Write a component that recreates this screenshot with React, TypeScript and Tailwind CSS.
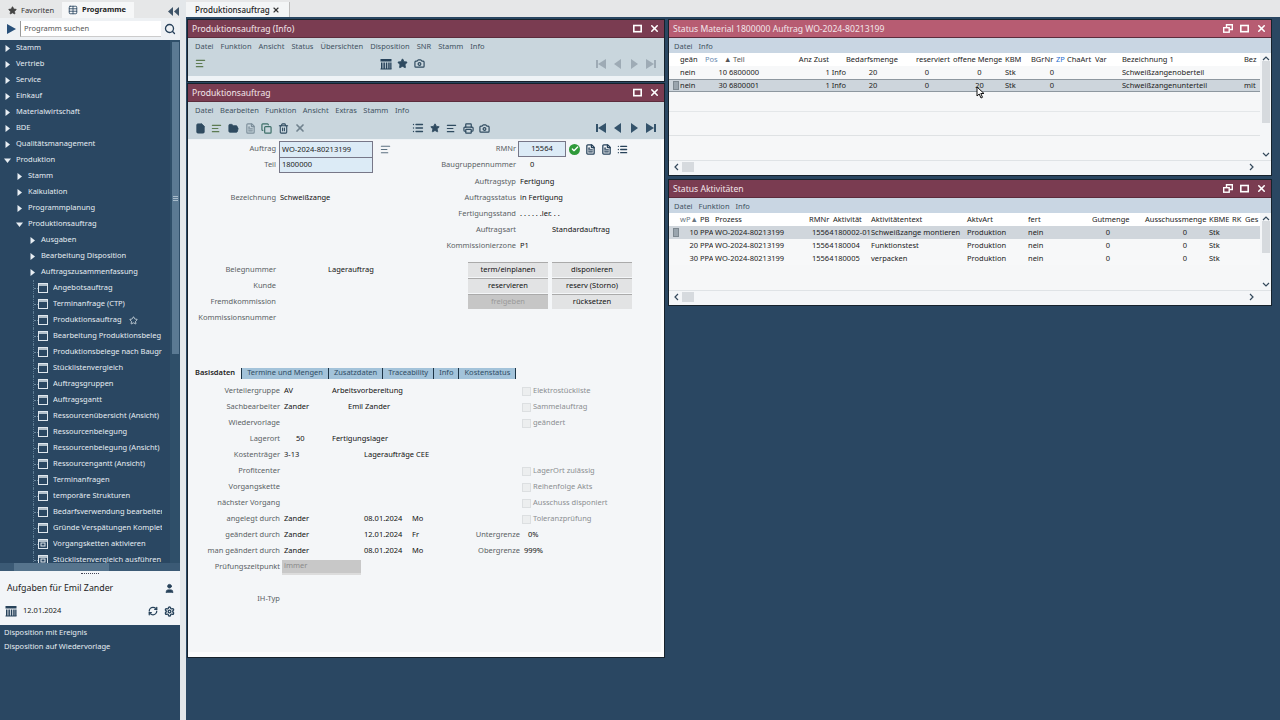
import React from "react";
import { AlignLeft, Camera, Copy, File, FolderOpen, Printer, RefreshCw, Search, Settings, Star, Table, Trash2, User, X, Check, List, FileText } from "lucide-react";

const font = "font-['Noto_Sans','Open_Sans',sans-serif]";
const tree: [number, string, string?][] = [
  [0, "Stamm"], [0, "Vertrieb"], [0, "Service"], [0, "Einkauf"], [0, "Materialwirtschaft"], [0, "BDE"], [0, "Qualitätsmanagement"],
  [0, "Produktion", "o"], [1, "Stamm"], [1, "Kalkulation"], [1, "Programmplanung"], [1, "Produktionsauftrag", "o"],
  [2, "Ausgaben"], [2, "Bearbeitung Disposition"], [2, "Auftragszusammenfassung"],
  [3, "Angebotsauftrag"], [3, "Terminanfrage (CTP)"], [3, "Produktionsauftrag", "s"], [3, "Bearbeitung Produktionsbeleg"],
  [3, "Produktionsbelege nach Baugr"], [3, "Stücklistenvergleich"], [3, "Auftragsgruppen"], [3, "Auftragsgantt"],
  [3, "Ressourcenübersicht (Ansicht)"], [3, "Ressourcenbelegung"], [3, "Ressourcenbelegung (Ansicht)"], [3, "Ressourcengantt (Ansicht)"],
  [3, "Terminanfragen"], [3, "temporäre Strukturen"], [3, "Bedarfsverwendung bearbeiten"], [3, "Gründe Verspätungen Komplet"],
  [4, "Vorgangsketten aktivieren"], [4, "Stücklistenvergleich ausführen"],
];

function Tri({ open }: { open?: boolean }) {
  return (
    <svg width="7" height="7" viewBox="0 0 7 7" className="shrink-0">
      <polygon points={open ? "0,1.5 7,1.5 3.5,6" : "1.5,0 6,3.5 1.5,7"} fill="#e8eef3" />
    </svg>
  );
}

function WinIcon({ gear }: { gear?: boolean }) {
  return (
    <svg width="10" height="10" viewBox="0 0 10 10" className="shrink-0" fill="none" stroke="#dfe7ee" strokeWidth="1">
      <rect x="0.5" y="0.5" width="9" height="9" />
      <line x1="0" y1="2" x2="10" y2="2" strokeWidth="1.5" />
      {gear && <rect x="3" y="4" width="4" height="3" />}
    </svg>
  );
}

function TreeRow({ lvl, text, flag }: { lvl: number; text: string; flag?: string }) {
  if (lvl >= 3) {
    return (
      <div className="flex h-4 items-center pl-[33px] overflow-hidden">
        <span className="w-[5px] h-full shrink-0 flex items-center border-l border-dotted border-[#5f7d94]">
          <span className="w-full border-t border-dotted border-[#6d8aa0]" />
        </span>
        <WinIcon gear={lvl === 4} />
        <span className="ml-[5px] w-[109px] h-4 overflow-hidden whitespace-nowrap flex items-center">
          {text}
          {flag === "s" && <Star size={9} className="ml-[7px] shrink-0" strokeWidth={2} />}
        </span>
      </div>
    );
  }
  const pad = lvl === 0 ? "pl-[4px]" : lvl === 1 ? "pl-[16px]" : "pl-[29px]";
  return (
    <div className={`flex h-4 items-center ${pad}`}>
      <Tri open={flag === "o"} />
      <span className="ml-[5px] whitespace-nowrap">{text}</span>
    </div>
  );
}

function SolidCalendar() {
  return (
    <svg width="12" height="12" viewBox="0 0 12 12" fill="#27425a">
      <rect x="0.5" y="1" width="11" height="2.5" />
      <rect x="1" y="4.5" width="1.5" height="6.5" /><rect x="3.4" y="4.5" width="1.5" height="6.5" />
      <rect x="5.8" y="4.5" width="1.5" height="6.5" /><rect x="8.2" y="4.5" width="1.5" height="6.5" />
      <rect x="10.2" y="4.5" width="1.3" height="6.5" /><rect x="0.5" y="10.5" width="11" height="1" />
    </svg>
  );
}

function Sidebar() {
  return (
    <aside className="w-[180px] h-[720px] flex flex-col shrink-0 bg-[#2a4762] text-[7.5px] leading-none text-[#e6edf2]">
      <div className="h-[18px] bg-[#e6e7e8] flex items-end text-[#333] shrink-0">
        <div className="w-[62px] h-[15px] flex items-center pl-[8px] gap-[4px]">
          <Star size={9} fill="#444" stroke="#444" />
          <span>Favoriten</span>
        </div>
        <div className="w-[72px] h-[16px] bg-[#f6f7f8] flex items-center pl-[6px] gap-[4px] font-bold text-[#222]">
          <Table size={10} className="text-[#2a4762]" />
          <span>Programme</span>
        </div>
        <div className="flex-1 flex justify-end pr-[1px] pb-[2px]">
          <svg width="11" height="9" viewBox="0 0 11 9"><polygon points="5,0 0,4.5 5,9" fill="#3f5468" /><polygon points="11,0 6,4.5 11,9" fill="#3f5468" /></svg>
        </div>
      </div>
      <div className="h-[22px] bg-[#eef1f4] flex items-center shrink-0 pl-[7px]">
        <svg width="9" height="10" viewBox="0 0 9 10"><polygon points="0,0 9,5 0,10" fill="#28507a" /></svg>
        <div className="ml-[4px] w-[141px] h-[16px] bg-white border-l border-[#999] border-b border-b-[#ccc] text-[#555] flex items-center pl-[3px]">Programm suchen</div>
        <Search size={12} strokeWidth={2.6} className="ml-[3px] text-[#26405a]" />
      </div>
      <div className="flex-1 flex min-h-0 relative">
        <div className="flex-1 min-w-0 overflow-hidden">
          {tree.map((t, i) => <TreeRow key={i} lvl={t[0]} text={t[1]} flag={t[2]} />)}
        </div>
        <div className="w-[10px] bg-[#2f4f69] flex flex-col items-center py-[2px]">
          <div className="w-[7px] h-[312px] bg-[#5b7a93] flex flex-col justify-center gap-[1px] items-center">
            <span className="w-[5px] h-px bg-[#a8bccb]" /><span className="w-[5px] h-px bg-[#a8bccb]" /><span className="w-[5px] h-px bg-[#a8bccb]" />
          </div>
        </div>
        <div className="absolute left-0 right-0 bottom-0 h-[8px] bg-[#3b5a75]">
          <div className="ml-[14px] w-[95px] h-[8px] bg-[#56748d]" />
        </div>
      </div>
      <div className="h-[54px] bg-[#f2f5f8] shrink-0 text-[#222] flex flex-col">
        <div className="h-[5px] flex justify-center items-center"><span className="w-[18px] border-t border-dotted border-[#445]" /></div>
        <div className="h-[23px] flex items-center justify-between pl-[7px] pr-[5px] pt-px text-[8.8px]">
          <span>Aufgaben für Emil Zander</span>
          <User size={11} fill="#27425a" stroke="#27425a" />
        </div>
        <div className="h-[24px] flex items-center pl-[5px] pr-[5px]">
          <SolidCalendar />
          <span className="ml-[6px] flex-1">12.01.2024</span>
          <RefreshCw size={10} strokeWidth={3} className="text-[#27425a]" />
          <Settings size={11} strokeWidth={3} className="ml-[6px] text-[#27425a]" />
        </div>
      </div>
      <div className="h-[95px] shrink-0 pl-[4px] pt-px">
        <div className="h-[14px] flex items-center">Disposition mit Ereignis</div>
        <div className="h-[14px] flex items-center">Disposition auf Wiedervorlage</div>
      </div>
    </aside>
  );
}

function Nav({ on }: { on?: boolean }) {
  const c = on ? "#34536b" : "#9eabb5";
  const items = [
    <g key="a"><rect x="0" y="1" width="2" height="8" fill={c} /><polygon points="10,0 2,5 10,10" fill={c} /></g>,
    <polygon key="b" points="8,0 1,5 8,10" fill={c} />,
    <polygon key="c" points="2,0 9,5 2,10" fill={c} />,
    <g key="d"><rect x="8" y="1" width="2" height="8" fill={c} /><polygon points="0,0 8,5 0,10" fill={c} /></g>,
  ];
  return (
    <div className="flex gap-[6.7px] pr-[8px]">
      {items.map((it, i) => <svg key={i} width="10" height="10" viewBox="0 0 10 10">{it}</svg>)}
    </div>
  );
}

function TitleBar({ title, active, restore }: { title: string; active?: boolean; restore?: boolean }) {
  return (
    <div className={`h-[18px] shrink-0 flex items-center pl-[4px] pr-[4px] text-[8.6px] leading-none text-[#f2e6ea] border-b border-[#5c2c3c] ${active ? "bg-[#b75c72]" : "bg-[#7a3c51]"}`}>
      <span className="flex-1 whitespace-nowrap pt-px">{title}</span>
      {restore && (
        <svg width="10" height="9" viewBox="0 0 10 9" className="mr-[7px]" fill="none" stroke="white" strokeWidth="1.4">
          <rect x="0.7" y="3.7" width="5.5" height="4.5" /><path d="M3.5 3V0.8H9.3V5.5H6.5" />
        </svg>
      )}
      <svg width="9" height="9" viewBox="0 0 9 9" className="mr-[7px]" fill="none" stroke="white" strokeWidth="1.6"><rect x="0.8" y="1.5" width="7.4" height="6.2" /></svg>
      <X size={11} strokeWidth={3.4} className="text-white" />
    </div>
  );
}

function Menu({ items, gap, pad }: { items: string[]; gap: string; pad: string }) {
  return (
    <div className={`h-[16px] shrink-0 flex items-center pt-px ${pad} ${gap} text-[7.5px] leading-none text-[#41525f]`}>
      {items.map((m) => <span key={m} className="whitespace-nowrap">{m}</span>)}
    </div>
  );
}

function Win({ cls, children }: { cls: string; children: React.ReactNode }) {
  return (
    <section className={`absolute flex flex-col overflow-hidden border border-[#16222c] bg-[#f4f6f8] ${cls}`}>
      {children}
    </section>
  );
}

const Lbl = ({ c, cls }: { c?: string; cls: string }) => <span className={`text-right whitespace-nowrap text-[#5a5f64] ${cls}`}>{c}</span>;
const Tbi = ({ children, cls }: { children: React.ReactNode; cls?: string }) => <span className={`w-[16.6px] flex justify-center shrink-0 ${cls ?? "text-[#2f4b60]"}`}>{children}</span>;

function Btn({ c, off }: { c: string; off?: boolean }) {
  return <div className={`w-[80px] h-[15px] flex items-center justify-center border-t border-[#aaa] ${off ? "bg-[#c6c6c6] text-[#9a9a9a]" : "bg-[#e2e3e4] text-[#111]"}`}>{c}</div>;
}

function TopRow({ l, children }: { l: string; children?: React.ReactNode }) {
  return <div className="h-4 flex items-center"><Lbl c={l} cls="w-[86px]" /><div className="ml-[4px] flex items-center">{children}</div></div>;
}

function BaseRow({ l, v1, v1c, v2, v2c, v3, v3l, chk, right }: { l?: string; v1?: string; v1c?: string; v2?: string; v2c?: string; v3?: string; v3l?: string; chk?: string; right?: string }) {
  return (
    <div className="h-4 grid grid-cols-[90px_52px_80px_108px_1fr] items-center whitespace-nowrap">
      <Lbl c={l} cls="" />
      <span className={`text-[#111] ${v1c ?? "pl-[4px]"}`}>{v1}</span>
      <span className={`text-[#111] ${v2c ?? ""}`}>{v2}</span>
      <div className="flex justify-between"><span className="text-[#111]">{v3}</span><Lbl c={v3l} cls="" /></div>
      {chk ? (
        <div className="flex items-center pl-[2px] text-[#8b8e91]">
          <span className="w-[9px] h-[9px] bg-[#eceeef] border border-[#dcdfe1] shrink-0" />
          <span className="ml-[2px]">{chk}</span>
        </div>
      ) : <span className={`text-[#111] ${right === "0%" ? "pl-[8px]" : "pl-[4px]"}`}>{right}</span>}
    </div>
  );
}

function InfoWin() {
  return (
    <Win cls="left-[1px] top-[2px] w-[478px] h-[63px]">
      <TitleBar title="Produktionsauftrag (Info)" />
      <div className="h-[38px] bg-[#c9d6dd] flex flex-col">
        <Menu pad="pl-[7px]" gap="gap-[7px]" items={["Datei", "Funktion", "Ansicht", "Status", "Übersichten", "Disposition", "SNR", "Stamm", "Info"]} />
        <div className="flex items-center pl-[4px] h-[19px]">
          <Tbi cls="text-[#5d7b52]"><AlignLeft size={11} strokeWidth={2.6} /></Tbi>
          <div className="w-[169px]" />
          <Tbi><SolidCalendar /></Tbi>
          <Tbi><Star size={11} fill="#2f4b60" /></Tbi>
          <Tbi><Camera size={11} strokeWidth={2.6} /></Tbi>
          <div className="flex-1" />
          <Nav />
        </div>
      </div>
      <div className="h-[5px] bg-[#eef3f6]" />
    </Win>
  );
}

function ProdWin() {
  return (
    <Win cls="left-[1px] top-[66px] w-[478px] h-[575px]">
      <TitleBar title="Produktionsauftrag" />
      <div className="h-[37px] shrink-0 bg-[#c9d6dd] flex flex-col">
        <Menu pad="pl-[7px]" gap="gap-[6.5px]" items={["Datei", "Bearbeiten", "Funktion", "Ansicht", "Extras", "Stamm", "Info"]} />
        <div className="flex items-center pl-[4px] h-[20px]">
          <Tbi><File size={11} fill="#2f4b60" /></Tbi>
          <Tbi cls="text-[#5d7b52]"><AlignLeft size={11} strokeWidth={2.6} /></Tbi>
          <Tbi><FolderOpen size={11} fill="#2f4b60" /></Tbi>
          <Tbi cls="text-[#7d8f9b]"><FileText size={11} strokeWidth={2.6} /></Tbi>
          <Tbi cls="text-[#3d6f68]"><Copy size={11} strokeWidth={2.6} /></Tbi>
          <Tbi><Trash2 size={11} strokeWidth={2.4} /></Tbi>
          <Tbi cls="text-[#71828e]"><X size={12} strokeWidth={3.4} /></Tbi>
          <div className="w-[102px]" />
          <Tbi><List size={12} strokeWidth={2.6} /></Tbi>
          <Tbi><Star size={10} fill="#2f4b60" /></Tbi>
          <Tbi><AlignLeft size={11} strokeWidth={2.6} /></Tbi>
          <Tbi><Printer size={11} strokeWidth={2.6} /></Tbi>
          <Tbi><Camera size={11} strokeWidth={2.6} /></Tbi>
          <div className="flex-1" />
          <Nav on />
        </div>
      </div>
      <div className="flex-1 min-h-0 flex flex-col text-[7.5px] leading-none pl-[2px] pt-px border-t border-[#eef3f6] border-r-[3px] border-r-[#fbfcfd] border-b-[5px] border-b-[#fbfcfd]">
        <div className="grid grid-cols-[240px_1fr] h-[114px] shrink-0">
          <div>
            <TopRow l="Auftrag"><span className="-ml-[1px] w-[94px] h-[16px] bg-[#dcebf6] border border-[#778] border-b-0 flex items-center pl-[2px] text-[#222]">WO-2024-80213199</span><AlignLeft size={11} strokeWidth={2.4} className="ml-[7px] text-[#5b7080]" /></TopRow>
            <TopRow l="Teil"><span className="-ml-[1px] w-[94px] h-[16px] bg-[#dcebf6] border border-[#778] flex items-center pl-[2px] text-[#222]">1800000</span></TopRow>
            <div className="h-[17px]" />
            <TopRow l="Bezeichnung"><span className="text-[#111]">Schweißzange</span></TopRow>
          </div>
          <div>
            <div className="h-4 flex items-center">
              <Lbl c="RMNr" cls="w-[86px]" />
              <span className="ml-[2px] w-[48px] h-[16px] bg-[#dcebf6] border border-[#778] flex items-center justify-center text-[#222]">15564</span>
              <span className="ml-[3px] w-[11px] h-[11px] rounded-full bg-[#2f9a3a] flex items-center justify-center"><Check size={8} strokeWidth={4} className="text-white" /></span>
              <FileText size={11} strokeWidth={2.8} className="ml-[5px] text-[#27425a]" />
              <FileText size={11} strokeWidth={2.8} className="ml-[5px] text-[#27425a]" />
              <List size={11} strokeWidth={2.8} className="ml-[5px] text-[#27425a]" />
            </div>
            <TopRow l="Baugruppennummer"><span className="pl-[10px] text-[#111]">0</span></TopRow>
            <div className="h-px" />
            <TopRow l="Auftragstyp"><span className="text-[#111]">Fertigung</span></TopRow>
            <TopRow l="Auftragsstatus"><span className="text-[#111]">in Fertigung</span></TopRow>
            <TopRow l="Fertigungsstand"><span className="text-[#111]">. . . . . .ler. . .</span></TopRow>
            <TopRow l="Auftragsart"><span className="pl-[32px] text-[#111]">Standardauftrag</span></TopRow>
            <TopRow l="Kommissionierzone"><span className="text-[#111]">P1</span></TopRow>
          </div>
        </div>
        <div className="mt-[7px] grid grid-cols-[278px_1fr] shrink-0 h-[64px]">
          <div>
            {["Belegnummer", "Kunde", "Fremdkommission", "Kommissionsnummer"].map((l, i) => (
              <div key={l} className="h-4 flex items-center"><Lbl c={l} cls="w-[86px]" />{i === 0 && <span className="ml-[52px] text-[#111]">Lagerauftrag</span>}</div>
            ))}
          </div>
          <div className="grid grid-cols-[84px_84px] auto-rows-[16px] content-start">
            <Btn c="term/einplanen" /><Btn c="disponieren" />
            <Btn c="reservieren" /><Btn c="reserv (Storno)" />
            <Btn c="freigeben" off /><Btn c="rücksetzen" />
          </div>
        </div>
        <div className="mt-[40px] flex items-center h-[14px] shrink-0 pl-[5px]">
          <span className="font-semibold text-[#222] pr-[6px]">Basisdaten</span>
          {["Termine und Mengen", "Zusatzdaten", "Traceability", "Info", "Kostenstatus"].map((t) => (
            <span key={t} className="h-[11px] flex items-center border-l border-[#1d3446] bg-[#a3c3da] px-[5px] text-[#2f4c63] whitespace-nowrap">{t}</span>
          ))}
          <span className="h-[11px] border-l border-[#1d3446]" />
        </div>
        <div className="mt-[3px] flex flex-col">
          <BaseRow l="Verteilergruppe" v1="AV" v2="Arbeitsvorbereitung" chk="Elektrostückliste" />
          <BaseRow l="Sachbearbeiter" v1="Zander" v2="Emil Zander" v2c="pl-[16px]" chk="Sammelauftrag" />
          <BaseRow l="Wiedervorlage" chk="geändert" />
          <BaseRow l="Lagerort" v1="50" v1c="pl-[16px]" v2="Fertigungslager" />
          <BaseRow l="Kostenträger" v1="3-13" v2="Lageraufträge CEE" v2c="pl-[32px]" />
          <BaseRow l="Profitcenter" chk="LagerOrt zulässig" />
          <BaseRow l="Vorgangskette" chk="Reihenfolge Akts" />
          <BaseRow l="nächster Vorgang" chk="Ausschuss disponiert" />
          <BaseRow l="angelegt durch" v1="Zander" v2="08.01.2024" v2c="pl-[32px]" v3="Mo" chk="Toleranzprüfung" />
          <BaseRow l="geändert durch" v1="Zander" v2="12.01.2024" v2c="pl-[32px]" v3="Fr" v3l="Untergrenze" right="0%" />
          <BaseRow l="man geändert durch" v1="Zander" v2="08.01.2024" v2c="pl-[32px]" v3="Mo" v3l="Obergrenze" right="999%" />
          <div className="h-4 flex items-center">
            <Lbl c="Prüfungszeitpunkt" cls="w-[90px]" />
            <span className="ml-[2px] w-[79px] h-[15px] bg-[#c8c8c8] border-b-2 border-[#dcdcdc] flex items-center pl-[2px] text-[#8a8a8a]">immer</span>
          </div>
          <div className="h-4" />
          <BaseRow l="IH-Typ" />
        </div>
      </div>
    </Win>
  );
}

const hM = "grid grid-cols-[25px_19px_9px_63px_50px_70px_37px_52px_26px_25px_11px_28px_27px_122px_16px]";
const bM = "grid grid-cols-[25px_22px_2px_80px_37px_54px_54px_51px_26px_23px_68px_122px_16px]";
const hA = "grid grid-cols-[20px_15px_94px_24px_38px_96px_61px_64px_53px_64px_23px_13px_15px]";
const bA = "grid grid-cols-[18px_17px_97px_19px_40px_96px_61px_52px_56px_73px_51px]";

function Scroll({ h }: { h: string }) {
  return (
    <div className="w-[11px] flex flex-col items-center shrink-0 bg-[#f4f6f8] text-[#34495c]">
      <svg width="8" height="6" viewBox="0 0 8 6" className="mt-[2px]" fill="none" stroke="currentColor" strokeWidth="1.2"><path d="M1 5L4 2L7 5" /></svg>
      <div className={`w-[8px] bg-[#d6dade] ${h}`} />
      <div className="flex-1" />
      <svg width="8" height="6" viewBox="0 0 8 6" className="mb-[2px]" fill="none" stroke="currentColor" strokeWidth="1.2"><path d="M1 1L4 4L7 1" /></svg>
    </div>
  );
}

function HBar() {
  return (
    <div className="h-[12px] shrink-0 flex items-center pl-[5px] pr-[17px] text-[#34495c] bg-[#f4f6f8] border-t border-[#dfe3e6]">
      <svg width="5" height="8" viewBox="0 0 5 8" fill="none" stroke="currentColor" strokeWidth="1.2"><path d="M4 1L1 4L4 7" /></svg>
      <span className="ml-[3px] w-[12px] h-[10px] bg-[#d6dade]" />
      <span className="flex-1" />
      <svg width="5" height="8" viewBox="0 0 5 8" fill="none" stroke="currentColor" strokeWidth="1.2"><path d="M1 1L4 4L1 7" /></svg>
    </div>
  );
}

const Marker = () => <span className="w-[6px] h-[9px] bg-[#9aa5ae] border border-[#7d8890] shrink-0" />;

function MatWin() {
  return (
    <Win cls="left-[482px] top-[2px] w-[604px] h-[157px]">
      <TitleBar title="Status Material 1800000 Auftrag WO-2024-80213199" active restore />
      <div className="h-[15px] shrink-0 bg-[#c9d6e3]"><Menu pad="pl-[5px]" gap="gap-[6px]" items={["Datei", "Info"]} /></div>
      <div className="flex-1 min-h-0 flex flex-col text-[7.5px] leading-none text-[#222] pb-[3px]">
        <div className="flex-1 min-h-0 flex">
          <div className="flex-1 min-w-0 flex flex-col bg-white">
            <div className="pl-[11px] pt-px h-[13px] shrink-0 flex items-center whitespace-nowrap">
              <div className={hM}>
                <span>geän</span><span className="text-[#6a8bb0]">Pos</span><span className="text-[#555]">▲</span><span className="text-[#555]">Teil</span><span className="text-right pr-[17px]">Anz Zust</span><span>Bedarfsmenge</span><span>reserviert</span><span>offene Menge</span><span>KBM</span><span>BGrNr</span><span className="text-[#2a6fd0]">ZP</span><span>ChaArt</span><span>Var</span><span>Bezeichnung 1</span><span className="overflow-hidden">Bez</span>
              </div>
            </div>
            <div className="pl-[11px] h-[13px] shrink-0 flex items-center whitespace-nowrap bg-[#f7f8f9]">
              <div className={bM}>
                <span>nein</span><span className="text-right">10</span><span /><span>6800000</span><span className="text-right">1 Info</span><span className="text-center">20</span><span className="text-center">0</span><span className="text-center">0</span><span>Stk</span><span className="text-right">0</span><span /><span>Schweißzangenoberteil</span><span />
              </div>
            </div>
            <div className="pl-[4px] h-[13px] shrink-0 flex items-center whitespace-nowrap bg-[#cdd5dc] border-y border-[#8e98a0]">
              <Marker />
              <div className={`${bM} ml-[1px]`}>
                <span>nein</span><span className="text-right">30</span><span /><span>6800001</span><span className="text-right">1 Info</span><span className="text-center">20</span><span className="text-center">0</span><span className="text-center">20</span><span>Stk</span><span className="text-right">0</span><span /><span>Schweißzangenunterteil</span><span>mit</span>
              </div>
            </div>
            <div className="flex-1 bg-[#f6f7f8] flex flex-col">
              <div className="h-[20px] border-b border-[#e4e7e9]" />
              <div className="h-[24px] border-b border-[#dfe2e4]" />
            </div>
          </div>
          <Scroll h="h-[62px]" />
        </div>
        <HBar />
      </div>
      <svg width="9" height="13" viewBox="0 0 9 13" className="absolute left-[307px] top-[66px]">
        <path d="M1 1V10L3.2 8L5 12L6.5 11.3L4.8 7.5H8Z" fill="white" stroke="#111" strokeWidth="1" />
      </svg>
    </Win>
  );
}

function AktRow({ cells, sel }: { cells: string[]; sel?: boolean }) {
  return (
    <div className={`h-[13px] shrink-0 flex items-center whitespace-nowrap ${sel ? "bg-[#d0d6dc] pl-[4px]" : "bg-[#f7f8f9] pl-[11px]"}`}>
      {sel && <Marker />}
      <div className={sel ? `${bA} ml-[1px]` : bA}>
        <span className="text-right">{cells[0]}</span><span className="ml-[2px] mr-[2px] overflow-hidden">PPA</span><span>{cells[1]}</span><span className="text-right pr-[1px]">15564</span><span className="pl-[3px]">{cells[2]}</span><span>{cells[3]}</span><span>Produktion</span><span>nein</span><span className="text-center">0</span><span className="text-right pr-[22px]">0</span><span>Stk</span>
      </div>
    </div>
  );
}

function AktWin() {
  return (
    <Win cls="left-[482px] top-[162px] w-[604px] h-[127px]">
      <TitleBar title="Status Aktivitäten" restore />
      <div className="h-[15px] shrink-0 bg-[#c9d6e3]"><Menu pad="pl-[5px]" gap="gap-[6px]" items={["Datei", "Funktion", "Info"]} /></div>
      <div className="flex-1 min-h-0 flex flex-col text-[7.5px] leading-none text-[#222] pb-[3px]">
        <div className="flex-1 min-h-0 flex">
          <div className="flex-1 min-w-0 flex flex-col bg-white">
            <div className="pl-[11px] pt-px h-[13px] shrink-0 flex items-center whitespace-nowrap">
              <div className={hA}>
                <span className="text-[#6a7680]">wP▲</span><span>PB</span><span>Prozess</span><span>RMNr</span><span>Aktivität</span><span>Aktivitätentext</span><span>AktvArt</span><span>fert</span><span>Gutmenge</span><span>Ausschussmenge</span><span>KBME</span><span>RK</span><span className="overflow-hidden">Ges</span>
              </div>
            </div>
            <AktRow sel cells={["10", "WO-2024-80213199", "180002-01", "Schweißzange montieren"]} />
            <AktRow cells={["20", "WO-2024-80213199", "180004", "Funktionstest"]} />
            <AktRow cells={["30", "WO-2024-80213199", "180005", "verpacken"]} />
            <div className="flex-1 bg-[#f6f7f8]" />
          </div>
          <Scroll h="h-[32px]" />
        </div>
        <HBar />
      </div>
    </Win>
  );
}

export default function App() {
  return (
    <div className={`w-[1280px] h-[720px] flex overflow-hidden bg-[#2a4762] text-[7.5px] ${font}`}>
      <Sidebar />
      <div className="w-[6px] h-full bg-[#e3e7ea] shrink-0" />
      <main className="flex-1 h-full flex flex-col min-w-0">
        <div className="h-[17px] shrink-0 bg-[#e6e7e8] flex items-end">
          <div className="w-[104px] h-[15px] bg-[#f3f5f6] flex items-center pl-[9px] text-[8px] font-medium text-[#222] border-r border-[#bbb]">
            <span className="flex-1 whitespace-nowrap">Produktionsauftrag</span>
            <X size={8} strokeWidth={3.4} className="mr-[9px] text-[#333]" />
          </div>
        </div>
        <div className="flex-1 relative min-h-0 bg-[#2a4762] text-[#222]">
          <InfoWin />
          <ProdWin />
          <MatWin />
          <AktWin />
        </div>
      </main>
    </div>
  );
}
